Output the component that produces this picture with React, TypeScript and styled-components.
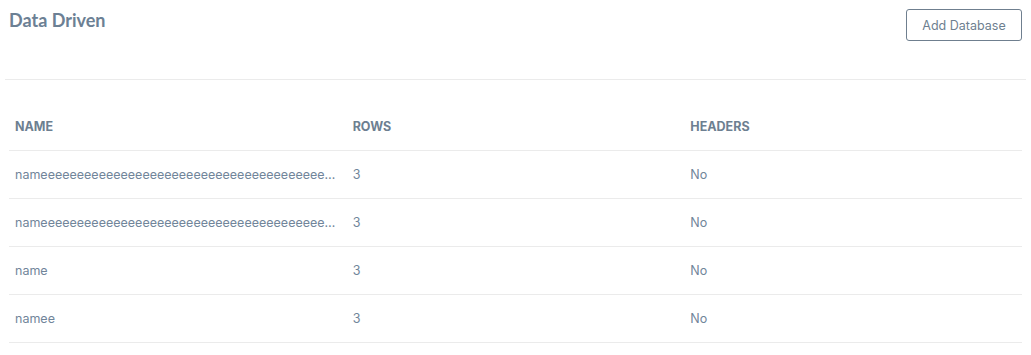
import React from 'react';
import styled, { createGlobalStyle } from 'styled-components';

const GlobalStyle = createGlobalStyle`
	body {
		margin: 0;
		background: #ffffff;
		font-family: Inter, 'Noto Sans', sans-serif;
	}
`;

interface DatabaseRow {
	name: string;
	rows: number;
	headers: boolean;
}

const databases: DatabaseRow[] = [
	{ name: 'name' + 'e'.repeat(60), rows: 3, headers: false },
	{ name: 'name' + 'e'.repeat(60), rows: 3, headers: false },
	{ name: 'name', rows: 3, headers: false },
	{ name: 'namee', rows: 3, headers: false },
];

export default function App() {
	return (
		<>
			<GlobalStyle />
			<Page>
				<Header>
					<Title>Data Driven</Title>
					<AddButton type="button">Add Database</AddButton>
				</Header>
				<Divider />
				<Table>
					<thead>
						<tr>
							<HeadCell>Name</HeadCell>
							<HeadCell>Rows</HeadCell>
							<HeadCell>Headers</HeadCell>
						</tr>
					</thead>
					<tbody>
						{databases.map((db, i) => (
							<tr key={i}>
								<Cell>
									<Truncate title={db.name}>{db.name}</Truncate>
								</Cell>
								<Cell>{db.rows}</Cell>
								<Cell>{db.headers ? 'Yes' : 'No'}</Cell>
							</tr>
						))}
					</tbody>
				</Table>
			</Page>
		</>
	);
}

const Page = styled.div`
	padding: 9px 9px 0 9px;
`;

const Header = styled.div`
	display: flex;
	justify-content: space-between;
	align-items: flex-start;
	height: 31px;
`;

const Title = styled.h1`
	margin: 0;
	font-family: Lato, sans-serif;
	font-weight: 700;
	font-size: 18px;
	line-height: 23px;
	color: #6c8094;
`;

const AddButton = styled.button`
	width: 116px;
	height: 32px;
	background: #ffffff;
	border: 1px solid #6f7f8f;
	border-radius: 3px;
	font-family: Inter, sans-serif;
	font-size: 12.5px;
	color: #6e7f90;
	cursor: pointer;
	padding: 0;
`;

const Divider = styled.hr`
	margin: 39px -4px 0 -4px;
	border: 0;
	border-top: 1px solid #ebebeb;
`;

const Table = styled.table`
	width: 100%;
	margin-top: 22px;
	border-collapse: collapse;
	table-layout: fixed;
`;

const HeadCell = styled.th`
	height: 48px;
	padding: 0 6px;
	text-align: left;
	font-size: 12.5px;
	font-weight: 700;
	text-transform: uppercase;
	color: #6d7f91;
	border-bottom: 1px solid #ebebeb;
`;

const Cell = styled.td`
	height: 47px;
	padding: 0 6px;
	font-size: 12.5px;
	color: #71859a;
	border-bottom: 1px solid #ebebeb;
`;

const Truncate = styled.div`
	white-space: nowrap;
	overflow: hidden;
	text-overflow: ellipsis;
`;
